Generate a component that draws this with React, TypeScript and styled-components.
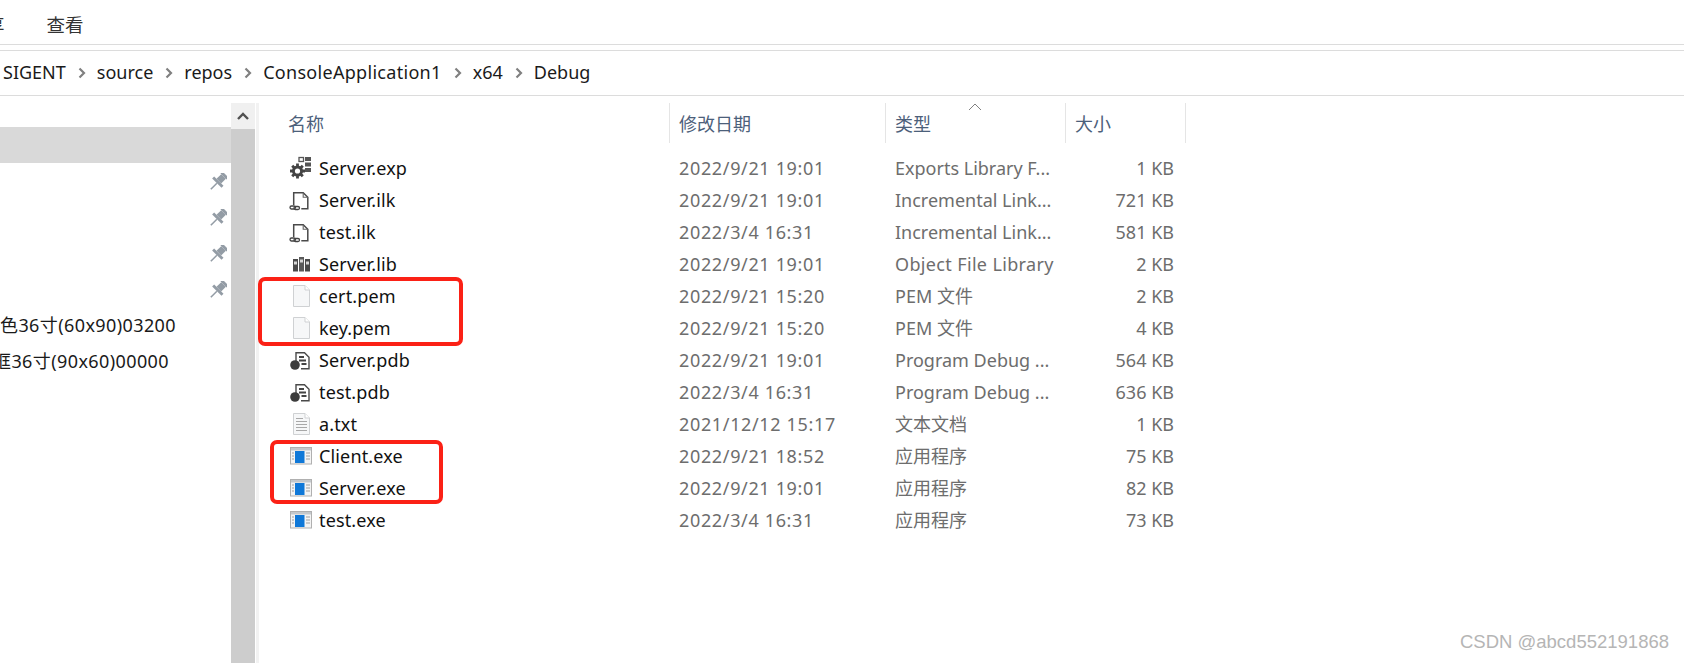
import React from 'react';
import styled, { createGlobalStyle } from 'styled-components';

const GlobalStyle = createGlobalStyle`
  html, body {
    margin: 0;
    padding: 0;
    background: #fff;
  }
  body {
    font-family: "Noto Sans", "Noto Sans CJK SC", sans-serif;
    font-size: 18px;
    color: #1a1a1a;
    overflow: hidden;
  }
`;

const Page = styled.div`
  position: relative;
  width: 1684px;
  height: 663px;
  overflow: hidden;
  background: #fff;
`;

const Ribbon = styled.div`
  height: 45px;
  display: flex;
  align-items: center;
  gap: 42px;
  margin-left: -14px;
  padding-top: 6px;
  box-sizing: border-box;
  border-bottom: 1px solid #dcdcdc;
`;

const RibbonTab = styled.span`
  font-size: 18.500px;
  line-height: 24px;
  color: #333;
`;

const AddressBar = styled.div`
  margin-top: 5px;
  height: 46px;
  box-sizing: border-box;
  border-top: 1px solid #dcdcdc;
  border-bottom: 1px solid #dcdcdc;
  display: flex;
  align-items: center;
  padding-left: 3px;
  padding-bottom: 2px;
`;

const Crumb = styled.span<{ $long?: boolean }>`
  line-height: 24px;
  letter-spacing: ${p => (p.$long ? 0.3 : 0)}px;
  color: #1a1a1a;
`;

const CrumbSep = styled.svg`
  width: 8px;
  height: 12px;
  margin: 1px 11px 0 12px;
  flex: none;
`;

const Body = styled.div`
  display: flex;
  height: 567px;
`;

const NavPane = styled.div`
  width: 231px;
  flex: none;
  padding-top: 31px;
  box-sizing: border-box;
  overflow: hidden;
`;

const NavRow = styled.div<{ $selected?: boolean }>`
  height: 36px;
  display: flex;
  align-items: center;
  justify-content: flex-end;
  padding-right: 4px;
  background: ${p => (p.$selected ? '#d9d9d9' : 'transparent')};
`;

const NavText = styled.span<{ $shift: number }>`
  margin-left: ${p => p.$shift}px;
  margin-right: auto;
  white-space: nowrap;
  line-height: 24px;
  letter-spacing: 0.4px;
`;

const Scrollbar = styled.div`
  width: 24px;
  flex: none;
  margin-top: 7px;
  display: flex;
  flex-direction: column;
`;

const ScrollUp = styled.div`
  height: 26px;
  background: #f0f0f0;
  display: flex;
  align-items: center;
  justify-content: center;
`;

const ScrollThumb = styled.div`
  flex: 1;
  background: #cdcdcd;
`;

const Divider = styled.div`
  width: 3px;
  flex: none;
  margin-left: 1px;
  margin-top: 7px;
  background: #f2f2f2;
`;

const FilePane = styled.div`
  flex: 1;
  padding-top: 7px;
`;

const HeaderRow = styled.div`
  display: flex;
  height: 40px;
`;

const HeaderCell = styled.div<{ $width: number; $pad: number }>`
  position: relative;
  width: ${p => p.$width}px;
  padding-left: ${p => p.$pad}px;
  box-sizing: border-box;
  border-right: 1px solid #e5e5e5;
  line-height: 42px;
  color: #4c607a;
`;

const SortArrow = styled.svg`
  position: absolute;
  left: 82px;
  top: 0;
  width: 14px;
  height: 8px;
`;

const FileList = styled.div`
  margin-top: 9px;
  padding-left: 30px;
`;

const FileRow = styled.div`
  display: grid;
  grid-template-columns: 390px 216px 170px 109px;
  height: 32px;
  align-items: center;
  line-height: 32px;
`;

const NameCell = styled.div`
  display: flex;
  align-items: center;
  gap: 7px;
  color: #111;
  letter-spacing: 0.15px;
`;

const IconSlot = styled.svg`
  width: 23px;
  height: 24px;
  flex: none;
`;

const MetaCell = styled.div<{ $spacing?: number }>`
  color: #6d6d6d;
  white-space: nowrap;
  letter-spacing: ${p => p.$spacing ?? 0}px;
`;

const SizeCell = styled(MetaCell)`
  text-align: right;
`;

const Callout = styled.div<{ $left: number; $top: number; $width: number; $height: number }>`
  position: absolute;
  left: ${p => p.$left}px;
  top: ${p => p.$top}px;
  width: ${p => p.$width}px;
  height: ${p => p.$height}px;
  box-sizing: border-box;
  border: 4px solid #fb2116;
  border-radius: 7px;
`;

const Watermark = styled.div`
  position: absolute;
  right: 15px;
  bottom: 11px;
  font-family: "Liberation Sans", Arial, sans-serif;
  font-size: 18.500px;
  line-height: 20px;
  color: #b5b5b5;
`;

const PinIcon = () => (
  <svg width="17" height="17" viewBox="0 0 18 18">
    <g transform="rotate(45 9 9)" fill="#939ca5">
      <rect x="4.500" y="-1.500" width="9" height="3" />
      <rect x="5.500" y="1.500" width="7" height="7" />
      <rect x="2" y="8.500" width="14" height="3" />
      <rect x="8.200" y="11.500" width="1.600" height="9" />
    </g>
  </svg>
);

const GearIcon = () => (
  <IconSlot viewBox="0 0 23 24">
    <rect x="10" y="1.500" width="4.500" height="4" fill="none" stroke="#555" strokeWidth="1.300" />
    <g fill="#555">
      <rect x="16" y="1" width="6" height="4" />
      <rect x="16" y="6.500" width="6" height="4" />
      <rect x="16" y="12" width="6" height="4" />
    </g>
    <g fill="#444">
      <circle cx="8.500" cy="15" r="5.500" />
      <g stroke="#444" strokeWidth="2.800">
        <path d="M8.500 7.500v15M1 15h15M3.200 9.700l10.600 10.600M13.800 9.700 3.200 20.300" />
      </g>
    </g>
    <circle cx="8.500" cy="15" r="2.600" fill="#fff" />
  </IconSlot>
);

const LinkedDocIcon = () => (
  <IconSlot viewBox="0 0 23 24">
    <path d="M4.700 17V4.700h9.500l4.600 4.600v11.500h-6.500" fill="#fff" stroke="#4a4a4a" strokeWidth="1.500" />
    <path d="M14.200 4.700v4.600h4.600" fill="none" stroke="#666" strokeWidth="1.100" />
    <rect x="1" y="18" width="5.500" height="3" rx="1.500" fill="none" stroke="#444" strokeWidth="1.300" />
    <rect x="5" y="18.500" width="5.500" height="3" rx="1.500" fill="none" stroke="#444" strokeWidth="1.300" />
  </IconSlot>
);

const BooksIcon = () => (
  <IconSlot viewBox="0 0 23 24">
    <rect x="4" y="7" width="5" height="12.500" fill="#4a4a4a" />
    <rect x="10" y="5" width="5" height="14.500" fill="#5a5a5a" />
    <rect x="16" y="7" width="5" height="12.500" fill="#4a4a4a" />
    <rect x="5" y="9.500" width="3" height="3" fill="#d8d8d8" />
    <rect x="11" y="7.500" width="3" height="3" fill="#d8d8d8" />
    <rect x="17" y="9.500" width="3" height="3" fill="#d8d8d8" />
  </IconSlot>
);

const BlankDocIcon = () => (
  <IconSlot viewBox="0 0 23 24">
    <path d="M4.500 1.500h11.500l4.500 4.500v16.500h-16z" fill="#f6f7f8" stroke="#cfd1d3" />
    <path d="M16 1.500v4.500h4.500" fill="#fff" stroke="#cfd1d3" />
  </IconSlot>
);

const TextDocIcon = () => (
  <IconSlot viewBox="0 0 23 24">
    <path d="M4.500 1.500h11.500l4.500 4.500v16.500h-16z" fill="#f6f7f8" stroke="#cfd1d3" />
    <path d="M16 1.500v4.500h4.500" fill="#fff" stroke="#cfd1d3" />
    <path d="M7 6.500h7M7 9.500h11M7 12.500h11M7 15.500h11M7 18.500h11" stroke="#a8a8a8" strokeWidth="1.100" />
  </IconSlot>
);

const DebugIcon = () => (
  <IconSlot viewBox="0 0 23 24">
    <path d="M7 13V4.700h8.500l4.500 4.500v11.500h-8" fill="#fff" stroke="#4a4a4a" strokeWidth="1.400" />
    <path d="M10 9h5M10 12.500h7M12.500 16h5" stroke="#444" strokeWidth="1.800" />
    <circle cx="6" cy="17" r="4.800" fill="#3c3c3c" />
  </IconSlot>
);

const ExeIcon = () => (
  <IconSlot viewBox="0 0 23 24">
    <rect x="1.500" y="3.500" width="21" height="16.500" fill="#f4f4f4" stroke="#b0b0b0" />
    <rect x="2" y="4" width="20" height="2.500" fill="#c4c8cc" />
    <rect x="6" y="7" width="9.500" height="12" fill="#0f78d8" />
    <path d="M3 9h2M3 12h2M3 15h2M17 9h4M17 12h4M17 15h4" stroke="#bcbcbc" strokeWidth="1.300" />
  </IconSlot>
);

const crumbs = ['SIGENT', 'source', 'repos', 'ConsoleApplication1', 'x64', 'Debug'];

const files: Array<{ name: string; icon: React.FC; date: string; type: string; size: string; typeSpacing?: number }> = [
  { name: 'Server.exp', icon: GearIcon, date: '2022/9/21 19:01', type: 'Exports Library F...', size: '1 KB' },
  { name: 'Server.ilk', icon: LinkedDocIcon, date: '2022/9/21 19:01', type: 'Incremental Link...', size: '721 KB' },
  { name: 'test.ilk', icon: LinkedDocIcon, date: '2022/3/4 16:31', type: 'Incremental Link...', size: '581 KB' },
  { name: 'Server.lib', icon: BooksIcon, date: '2022/9/21 19:01', type: 'Object File Library', size: '2 KB', typeSpacing: 0.35 },
  { name: 'cert.pem', icon: BlankDocIcon, date: '2022/9/21 15:20', type: 'PEM 文件', size: '2 KB' },
  { name: 'key.pem', icon: BlankDocIcon, date: '2022/9/21 15:20', type: 'PEM 文件', size: '4 KB' },
  { name: 'Server.pdb', icon: DebugIcon, date: '2022/9/21 19:01', type: 'Program Debug ...', size: '564 KB' },
  { name: 'test.pdb', icon: DebugIcon, date: '2022/3/4 16:31', type: 'Program Debug ...', size: '636 KB' },
  { name: 'a.txt', icon: TextDocIcon, date: '2021/12/12 15:17', type: '文本文档', size: '1 KB' },
  { name: 'Client.exe', icon: ExeIcon, date: '2022/9/21 18:52', type: '应用程序', size: '75 KB' },
  { name: 'Server.exe', icon: ExeIcon, date: '2022/9/21 19:01', type: '应用程序', size: '82 KB' },
  { name: 'test.exe', icon: ExeIcon, date: '2022/3/4 16:31', type: '应用程序', size: '73 KB' },
];

export default function App() {
  return (
    <Page>
      <GlobalStyle />
      <Ribbon>
        <RibbonTab>享</RibbonTab>
        <RibbonTab>查看</RibbonTab>
      </Ribbon>
      <AddressBar>
        {crumbs.map((c, i) => (
          <React.Fragment key={c}>
            {i > 0 && (
              <CrumbSep viewBox="0 0 8 12">
                <path d="M1.500 1.500 6 6l-4.500 4.500" fill="none" stroke="#808080" strokeWidth="2.200" />
              </CrumbSep>
            )}
            <Crumb $long={c.length > 10}>{c}</Crumb>
          </React.Fragment>
        ))}
      </AddressBar>
      <Body>
        <NavPane>
          <NavRow $selected />
          <NavRow><PinIcon /></NavRow>
          <NavRow><PinIcon /></NavRow>
          <NavRow><PinIcon /></NavRow>
          <NavRow><PinIcon /></NavRow>
          <NavRow><NavText $shift={0}>色36寸(60x90)03200</NavText></NavRow>
          <NavRow><NavText $shift={-7}>框36寸(90x60)00000</NavText></NavRow>
        </NavPane>
        <Scrollbar>
          <ScrollUp>
            <svg width="14" height="10" viewBox="0 0 14 10">
              <path d="M2 8l5-5 5 5" fill="none" stroke="#505050" strokeWidth="2.400" />
            </svg>
          </ScrollUp>
          <ScrollThumb />
        </Scrollbar>
        <Divider />
        <FilePane>
          <HeaderRow>
            <HeaderCell $width={411} $pad={29}>名称</HeaderCell>
            <HeaderCell $width={216} $pad={9}>修改日期</HeaderCell>
            <HeaderCell $width={180} $pad={9}>
              类型
              <SortArrow viewBox="0 0 14 8">
                <path d="M1 7l6-6 6 6" fill="none" stroke="#808080" />
              </SortArrow>
            </HeaderCell>
            <HeaderCell $width={120} $pad={9}>大小</HeaderCell>
          </HeaderRow>
          <FileList>
            {files.map(f => (
              <FileRow key={f.name}>
                <NameCell>
                  <f.icon />
                  {f.name}
                </NameCell>
                <MetaCell $spacing={0.65}>{f.date}</MetaCell>
                <MetaCell $spacing={f.typeSpacing}>{f.type}</MetaCell>
                <SizeCell>{f.size}</SizeCell>
              </FileRow>
            ))}
          </FileList>
        </FilePane>
      </Body>
      <Callout $left={258} $top={277} $width={205} $height={69} />
      <Callout $left={270} $top={440} $width={173} $height={64} />
      <Watermark>CSDN @abcd552191868</Watermark>
    </Page>
  );
}
